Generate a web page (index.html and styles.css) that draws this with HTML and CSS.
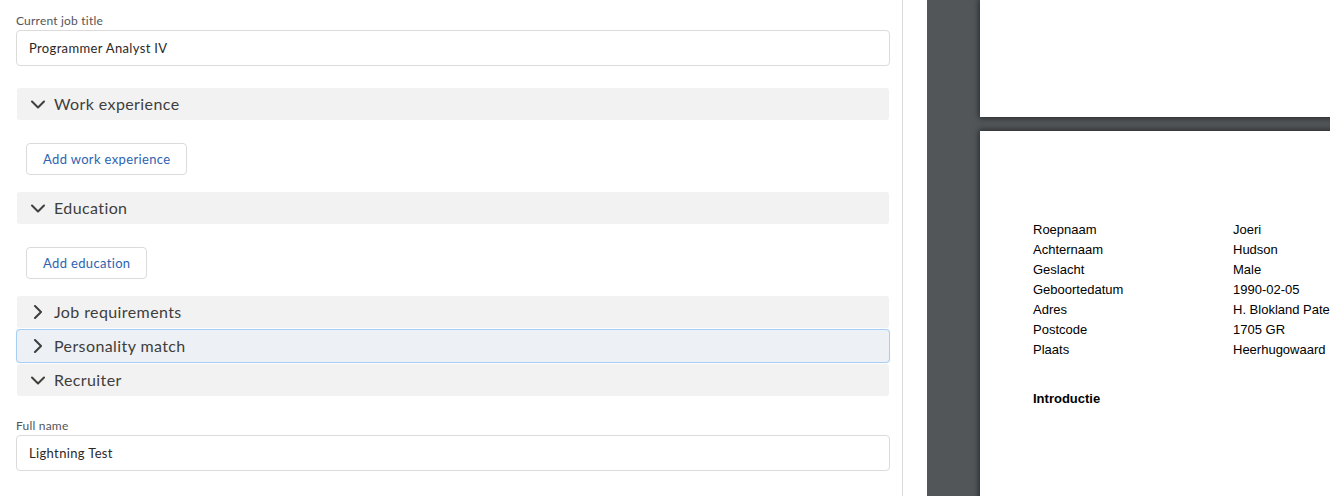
FILE: index.html
```html
<!DOCTYPE html>
<html lang="en">
<head>
<meta charset="utf-8">
<title>Candidate form</title>
<link rel="stylesheet" href="styles.css">
</head>
<body>
<div class="app">
  <div class="form-panel">
    <div class="field">
      <label class="field-label">Current job title</label>
      <div class="input">Programmer Analyst IV</div>
    </div>

    <div class="section">
      <div class="section-header">
        <svg class="chev" viewBox="0 0 14 14"><path d="M1 4.5 L7 10.5 L13 4.5"/></svg>
        <span>Work experience</span>
      </div>
      <div class="section-body">
        <button class="btn">Add work experience</button>
      </div>
    </div>

    <div class="section">
      <div class="section-header">
        <svg class="chev" viewBox="0 0 14 14"><path d="M1 4.5 L7 10.5 L13 4.5"/></svg>
        <span>Education</span>
      </div>
      <div class="section-body">
        <button class="btn">Add education</button>
      </div>
    </div>

    <div class="section">
      <div class="section-header">
        <svg class="chev" viewBox="0 0 14 14"><path d="M4 1 L10 7 L4 13"/></svg>
        <span>Job requirements</span>
      </div>
    </div>

    <div class="section">
      <div class="section-header focused">
        <svg class="chev" viewBox="0 0 14 14"><path d="M4 1 L10 7 L4 13"/></svg>
        <span>Personality match</span>
      </div>
    </div>

    <div class="section">
      <div class="section-header">
        <svg class="chev" viewBox="0 0 14 14"><path d="M1 4.5 L7 10.5 L13 4.5"/></svg>
        <span>Recruiter</span>
      </div>
      <div class="section-body fields">
        <div class="field">
          <label class="field-label">Full name</label>
          <div class="input">Lightning Test</div>
        </div>
      </div>
    </div>
  </div>

  <div class="spacer"></div>

  <div class="viewer">
    <div class="pages">
      <div class="page page-top"></div>
      <div class="page page-main">
        <div class="kv">
          <div class="k">Roepnaam</div><div class="v">Joeri</div>
          <div class="k">Achternaam</div><div class="v">Hudson</div>
          <div class="k">Geslacht</div><div class="v">Male</div>
          <div class="k">Geboortedatum</div><div class="v">1990-02-05</div>
          <div class="k">Adres</div><div class="v">H. Blokland Pate</div>
          <div class="k">Postcode</div><div class="v">1705 GR</div>
          <div class="k">Plaats</div><div class="v">Heerhugowaard</div>
        </div>
        <div class="heading">Introductie</div>
      </div>
    </div>
  </div>
</div>
</body>
</html>
```

FILE: styles.css
```css
html, body {
  margin: 0;
  padding: 0;
  background: #ffffff;
}

body {
  font-family: Lato, "Noto Sans", "Liberation Sans", sans-serif;
  color: #3e3e3c;
}

.app {
  display: flex;
  width: 1330px;
  height: 496px;
  overflow: hidden;
}

.form-panel {
  width: 874px;
  flex: 0 0 874px;
  padding: 12px 12px 0 16px;
  border-right: 1px solid #dddbda;
  overflow: hidden;
}

.field-label {
  display: block;
  font-size: 12px;
  line-height: 18px;
  letter-spacing: 0.2px;
  color: #54545a;
}

.input {
  box-sizing: border-box;
  height: 36px;
  border: 1px solid #dddbda;
  border-radius: 4px;
  padding: 0 12px;
  font-size: 13px;
  line-height: 34px;
  letter-spacing: 0.35px;
  color: #2b2826;
  background: #fff;
}

.field + .section {
  margin-top: 21px;
}

.section-header {
  box-sizing: border-box;
  height: 34px;
  display: flex;
  align-items: center;
  gap: 9px;
  padding-left: 14px;
  padding-bottom: 1px;
  border: 1px solid transparent;
  background: #f3f2f2;
  background-clip: padding-box;
  border-radius: 4px;
  font-size: 16px;
  letter-spacing: 0.4px;
  color: #3e3e3c;
}

.section-header.focused {
  background: #edf0f5;
  background-clip: padding-box;
  border-color: #a8cdf3;
  box-shadow: 0 0 1px #cfe3f8;
}

.chev {
  width: 14px;
  height: 14px;
  flex: 0 0 14px;
  margin-top: 1px;
  fill: none;
  stroke: #3e3e3c;
  stroke-width: 2;
  stroke-linecap: round;
  stroke-linejoin: round;
}

.section-body {
  padding: 22px 0 16px 10px;
}

.section-body.fields {
  padding: 20px 0 0 0;
}

.btn {
  box-sizing: border-box;
  height: 32px;
  padding: 0 16px;
  border: 1px solid #dddbda;
  border-radius: 4px;
  background: #fff;
  font-family: Lato, "Noto Sans", "Liberation Sans", sans-serif;
  font-size: 13px;
  letter-spacing: 0.35px;
  color: #2e63b0;
  display: block;
}

.spacer {
  width: 24px;
  flex: 0 0 24px;
  background: #fff;
}

.viewer {
  flex: 1 1 auto;
  background: #525659;
  padding-left: 53px;
  overflow: hidden;
}

.pages {
  display: flex;
  flex-direction: column;
  gap: 14px;
  width: 700px;
}

.page {
  background: #fff;
  box-shadow: 0 0 6px 1px rgba(0, 0, 0, 0.55);
}

.page-top {
  height: 117px;
}

.page-main {
  height: 600px;
  padding: 89px 0 0 53px;
  font-family: "Liberation Sans", Arial, sans-serif;
  font-size: 13px;
  color: #000;
}

.kv {
  display: grid;
  grid-template-columns: 200px 1fr;
  line-height: 20px;
}

.heading {
  margin-top: 29px;
  line-height: 20px;
  font-weight: bold;
}
```
